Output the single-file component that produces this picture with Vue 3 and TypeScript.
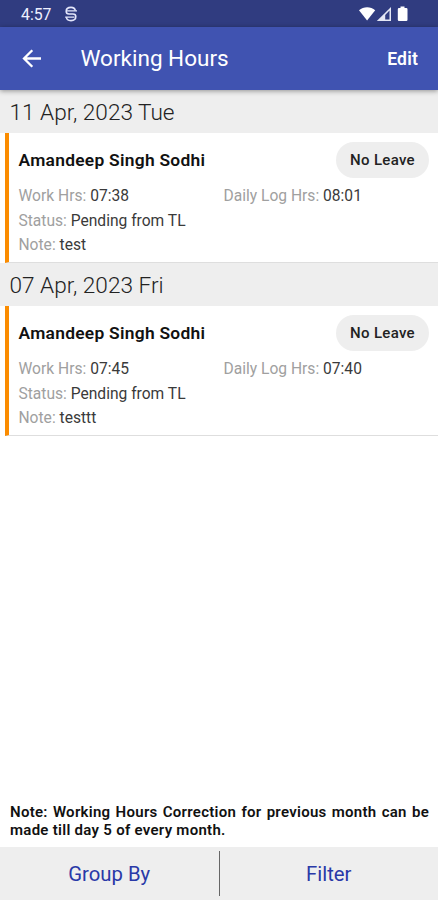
<script setup lang="ts">
interface Entry {
  date: string
  name: string
  leave: string
  work: string
  log: string
  status: string
  note: string
}

const entries: Entry[] = [
  { date: '11 Apr, 2023 Tue', name: 'Amandeep Singh Sodhi', leave: 'No Leave', work: '07:38', log: '08:01', status: 'Pending from TL', note: 'test' },
  { date: '07 Apr, 2023 Fri', name: 'Amandeep Singh Sodhi', leave: 'No Leave', work: '07:45', log: '07:40', status: 'Pending from TL', note: 'testtt' },
]
</script>

<template>
  <div class="screen">
    <div class="status-bar">
      <span class="clock">4:57</span>
      <svg class="app-icon" width="14" height="16" viewBox="0 0 14 16" fill="none" stroke="#e4e7fb" stroke-width="1.6">
        <path d="M11.3 4.6C11 2.4 9.5 1.4 7 1.4C4.2 1.4 2.2 2.8 2.2 5.2Q2.2 8 5 8H9Q11.8 8 11.8 10.6C11.8 13.2 9.8 14.6 7 14.6C4.4 14.6 2.6 13.4 2.4 11.2" />
        <path d="M3 4.8H13M1.2 11.1H10.5" stroke-width="1.3" />
      </svg>
      <svg class="system-icons" width="52" height="18" viewBox="0 0 52 18" fill="#fff">
        <path d="M1 5.2C5.5 1.2 12.8 1.2 17.2 5.2L9.1 15.6Z" />
        <path d="M33 2V16H18.8Z" fill="#e4e7f5" />
        <path d="M31.5 5.6V14.4H27.2V9.9Z" fill="#303c80" />
        <path d="M42.5 1.5H46.5V3H48.3Q49.5 3 49.5 4.2V14.8Q49.5 16 48.3 16H41Q39.8 16 39.8 14.8V4.2Q39.8 3 41 3H42.5Z" />
      </svg>
    </div>

    <header class="app-bar">
      <svg class="back" width="20" height="20" viewBox="0 0 20 20" fill="none" stroke="#fff" stroke-width="2.3">
        <path d="M19 9.5H2.5M10.3 1.2L2 9.5L10.3 17.8" />
      </svg>
      <h1 class="title">Working Hours</h1>
      <span class="edit">Edit</span>
    </header>

    <main class="list">
      <section v-for="entry in entries" :key="entry.date">
        <h2 class="date">{{ entry.date }}</h2>
        <article class="card">
          <div class="card-head">
            <span class="name">{{ entry.name }}</span>
            <span class="chip">{{ entry.leave }}</span>
          </div>
          <div class="row">
            <div class="cell"><span class="label">Work Hrs: </span>{{ entry.work }}</div>
            <div class="cell"><span class="label">Daily Log Hrs: </span>{{ entry.log }}</div>
          </div>
          <div class="row"><div><span class="label">Status: </span>{{ entry.status }}</div></div>
          <div class="row"><div><span class="label">Note: </span>{{ entry.note }}</div></div>
        </article>
      </section>
    </main>

    <p class="notice">Note: Working Hours Correction for previous month can be made till day 5 of every month.</p>

    <footer class="footer">
      <span class="action">Group By</span>
      <span class="divider"></span>
      <span class="action">Filter</span>
    </footer>
  </div>
</template>

<style>
body {
  background: #fff;
}
</style>

<style scoped>
.screen {
  display: flex;
  flex-direction: column;
  width: 438px;
  height: 900px;
  overflow: hidden;
  background: #fff;
  color: #3a3a3a;
  font-family: Roboto, "Liberation Sans", sans-serif;
}
.status-bar {
  display: flex;
  align-items: center;
  height: 27px;
  flex: none;
  padding: 1px 28px 0 21px;
  box-sizing: border-box;
  background: #303c80;
}
.clock {
  width: 43px;
  color: #eef0ff;
  font-size: 15.8px;
}
.system-icons {
  margin-left: auto;
}
.app-bar {
  display: flex;
  align-items: center;
  position: relative;
  z-index: 1;
  flex: none;
  height: 63px;
  padding: 0 20px 0 22px;
  box-sizing: border-box;
  background: #4053b1;
  box-shadow: 0 1px 5px rgba(0, 0, 0, 0.4);
  color: #fff;
}
.title {
  margin: -1px 0 0 38.5px;
  font-size: 22.5px;
  font-weight: 400;
}
.edit {
  margin-left: auto;
  font-size: 17.5px;
  font-weight: 600;
  letter-spacing: 0.2px;
}
.list {
  flex: 1;
}
.date {
  height: 43px;
  margin: 0;
  padding: 1px 9.5px 0;
  box-sizing: border-box;
  background: #eee;
  color: #222;
  font-size: 22.6px;
  font-weight: 300;
  line-height: 43px;
}
.card {
  height: 130px;
  margin-left: 5px;
  padding: 9px 9px 0 9.5px;
  box-sizing: border-box;
  border-left: 4px solid #fb8c00;
  border-bottom: 1px solid #dedede;
}
.card-head {
  display: flex;
  align-items: center;
  justify-content: space-between;
  height: 36px;
  margin-bottom: 6px;
}
.name {
  color: #111;
  font-size: 17.4px;
  font-weight: 600;
  letter-spacing: 0.27px;
}
.chip {
  width: 93px;
  border-radius: 18px;
  background: #eee;
  color: #222;
  font-size: 15px;
  font-weight: 500;
  letter-spacing: 0.3px;
  line-height: 36px;
  text-align: center;
}
.row {
  display: grid;
  grid-template-columns: 205px 1fr;
  font-size: 15.6px;
  line-height: 24.5px;
  white-space: nowrap;
}
.label {
  color: #a0a0a0;
}
.notice {
  margin: 0 9px 8px 10px;
  color: #111;
  font-size: 15px;
  font-weight: 600;
  letter-spacing: 0.28px;
  line-height: 18px;
  text-align: justify;
}
.footer {
  display: flex;
  align-items: center;
  flex: none;
  height: 53px;
  background: #eee;
}
.action {
  flex: 1;
  color: #2939a8;
  font-size: 20.3px;
  text-align: center;
}
.divider {
  width: 1px;
  height: 45px;
  background: #666;
}
</style>
